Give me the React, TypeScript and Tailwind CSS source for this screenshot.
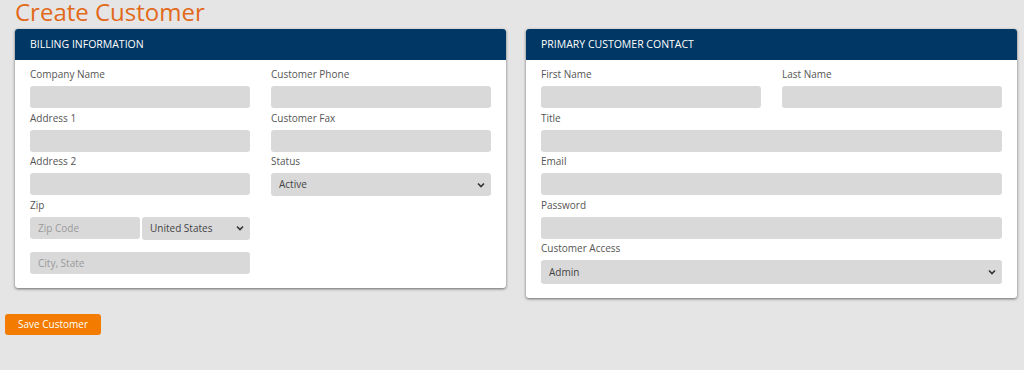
import React from "react";

const font = { fontFamily: '"Open Sans", "Noto Sans", Arial, sans-serif' };

function Chevron() {
  return (
    <svg
      className="pointer-events-none absolute right-[6px] top-1/2 -translate-y-1/2"
      width="8"
      height="6"
      viewBox="0 0 8 6"
    >
      <path d="M1 1.5 L4 4.5 L7 1.5" fill="none" stroke="#333" strokeWidth="1.6" />
    </svg>
  );
}

function Label({ children }: { children: React.ReactNode }) {
  return <div className="mb-[5px] text-[10px] leading-[14px] text-[#555]">{children}</div>;
}

function Input({ placeholder }: { placeholder?: string }) {
  return (
    <input
      placeholder={placeholder}
      className="block h-[22px] w-full rounded-[3px] bg-[#d9d9d9] px-[8px] text-[10px] text-[#444] outline-none placeholder:text-[#9a9a9a]"
    />
  );
}

function Select({ value, h = "h-[23px]" }: { value: string; h?: string }) {
  return (
    <div className={`relative w-full ${h}`}>
      <select
        defaultValue={value}
        className="block h-full w-full appearance-none rounded-[3px] bg-[#d9d9d9] px-[8px] text-[10px] text-[#444] outline-none"
      >
        <option>{value}</option>
      </select>
      <Chevron />
    </div>
  );
}

function Field({ label, children }: { label: string; children: React.ReactNode }) {
  return (
    <div className="mb-[2.5px]">
      <Label>{label}</Label>
      {children}
    </div>
  );
}

function Card({ title, children, pb }: { title: string; children: React.ReactNode; pb: string }) {
  return (
    <div className="w-[491px] self-start overflow-hidden rounded-[3px] bg-white shadow-[0_1px_3px_rgba(0,0,0,0.55)]">
      <div className="flex h-[31px] items-center bg-[#003764] px-[15px] text-[10.5px] font-medium text-white">
        {title}
      </div>
      <div className={`px-[15px] pt-[7px] ${pb}`}>{children}</div>
    </div>
  );
}

export default function App() {
  return (
    <div className="h-[370px] w-[1024px] overflow-hidden bg-[#e5e5e5]" style={font}>
      <h1 className="h-[29px] pl-[15px] text-[24px] leading-[24px] font-medium text-[#e2691a]">
        Create Customer
      </h1>
      <div className="flex items-start gap-[20px] pl-[15px]">
        <Card title="BILLING INFORMATION" pb="pb-[14px]">
          <div className="grid grid-cols-2 gap-x-[21px]">
            <div>
              <Field label="Company Name">
                <Input />
              </Field>
              <Field label="Address 1">
                <Input />
              </Field>
              <Field label="Address 2">
                <Input />
              </Field>
              <Field label="Zip">
                <div className="flex gap-[2px]">
                  <div className="w-[110px]">
                    <Input placeholder="Zip Code" />
                  </div>
                  <div className="flex-1">
                    <Select value="United States" h="h-[23px]" />
                  </div>
                </div>
              </Field>
              <div className="mt-[12px]">
                <Input placeholder="City, State" />
              </div>
            </div>
            <div>
              <Field label="Customer Phone">
                <Input />
              </Field>
              <Field label="Customer Fax">
                <Input />
              </Field>
              <Field label="Status">
                <Select value="Active" />
              </Field>
            </div>
          </div>
        </Card>
        <Card title="PRIMARY CUSTOMER CONTACT" pb="pb-[11px]">
          <div className="grid grid-cols-2 gap-x-[21px]">
            <Field label="First Name">
              <Input />
            </Field>
            <Field label="Last Name">
              <Input />
            </Field>
          </div>
          <Field label="Title">
            <Input />
          </Field>
          <Field label="Email">
            <Input />
          </Field>
          <Field label="Password">
            <Input />
          </Field>
          <Field label="Customer Access">
            <Select value="Admin" h="h-[24px]" />
          </Field>
        </Card>
      </div>
      <button className="ml-[5px] mt-[16px] block h-[21px] w-[96px] rounded-[3px] bg-[#f27b00] text-[10px] text-white">
        Save Customer
      </button>
    </div>
  );
}
